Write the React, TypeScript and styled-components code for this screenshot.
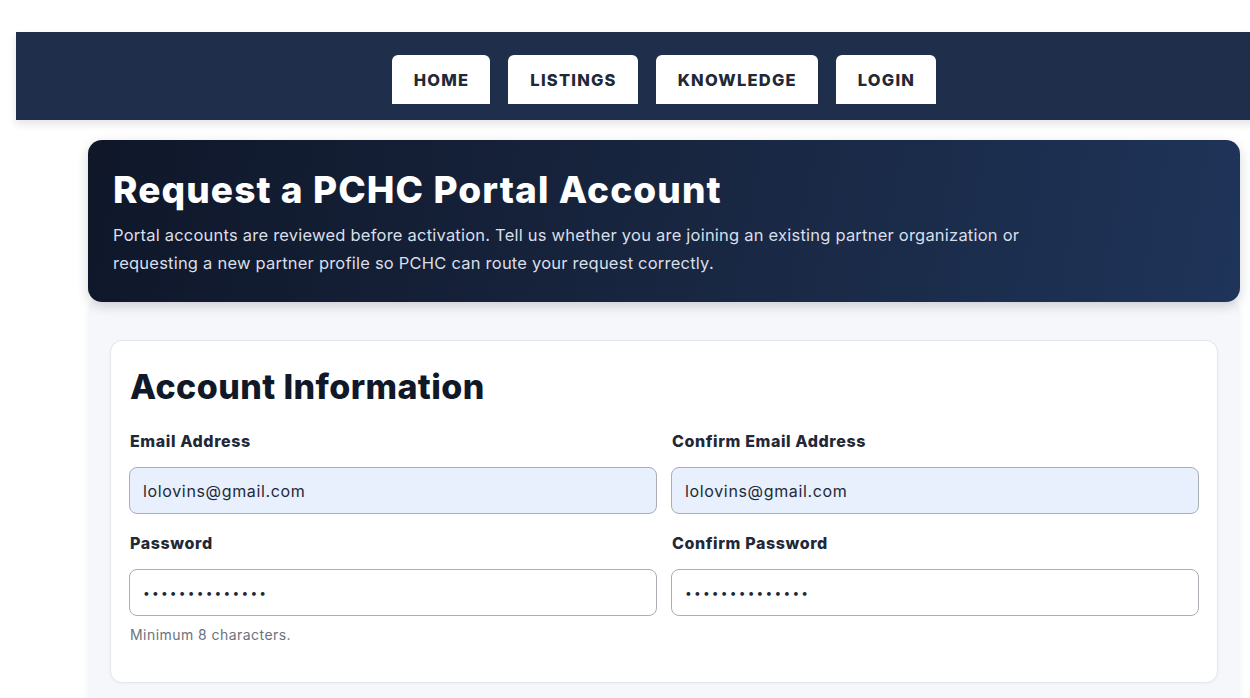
import styled, { createGlobalStyle } from 'styled-components';

const GlobalStyle = createGlobalStyle`
  html, body {
    margin: 0;
    padding: 0;
    background: #ffffff;
    overflow: hidden;
  }
  body {
    font-family: Inter, "Noto Sans", Arial, sans-serif;
    color: #111827;
  }
  * {
    box-sizing: border-box;
  }
`;

const Page = styled.div`
  padding: 32px 0 0 16px;
  width: 1250px;
  min-height: 698px;
`;

const NavBar = styled.nav`
  width: 1296px;
  height: 88px;
  padding-top: 23px;
  background: #1f2e4a;
  display: flex;
  justify-content: center;
  align-items: flex-start;
  gap: 18px;
  box-shadow: 0 4px 8px rgba(15, 23, 42, 0.12);
`;

const NavTab = styled.a`
  height: 49px;
  padding: 0 21px 0 22px;
  display: flex;
  align-items: center;
  background: #ffffff;
  border-radius: 6px 6px 0 0;
  color: #1f2937;
  font-size: 16.5px;
  font-weight: 800;
  letter-spacing: 1.2px;
  text-decoration: none;
`;

const Main = styled.main`
  width: 1152px;
  margin: 20px 0 0 72px;
`;

const Hero = styled.section`
  height: 162px;
  padding: 27px 25px;
  border-radius: 14px;
  background: linear-gradient(100deg, #0f1729 0%, #17243d 45%, #1f3459 100%);
  box-shadow: 0 4px 12px rgba(15, 23, 42, 0.18);
  color: #ffffff;
  position: relative;
  z-index: 1;
`;

const HeroTitle = styled.h1`
  margin: 0;
  font-size: 37px;
  line-height: 46px;
  font-weight: 800;
  letter-spacing: 1.1px;
`;

const HeroText = styled.p`
  margin: 8px 0 0;
  max-width: 940px;
  font-size: 16.5px;
  line-height: 28px;
  letter-spacing: 0.22px;
  color: #d9dfe9;
`;

const Panel = styled.div`
  margin-top: -4px;
  padding: 42px 22px 30px;
  background: #f5f7fa;
  border-radius: 14px 14px 0 0;
  box-shadow: 0 0 6px rgba(15, 23, 42, 0.05);
  min-height: 400px;
`;

const Card = styled.section`
  padding: 24px 18px 38px;
  background: #ffffff;
  border: 1px solid #e3e6eb;
  border-radius: 12px;
  box-shadow: 0 1px 3px rgba(15, 23, 42, 0.04);
`;

const CardTitle = styled.h2`
  margin: 0 0 22px 1px;
  font-size: 34px;
  line-height: 44px;
  font-weight: 800;
  letter-spacing: 0.4px;
  color: #111827;
`;

const FieldGrid = styled.div`
  display: grid;
  grid-template-columns: 1fr 1fr;
  column-gap: 14px;
  row-gap: 19px;
`;

const Field = styled.div`
  display: flex;
  flex-direction: column;
`;

const Label = styled.label`
  margin: 0 0 16px 1px;
  font-size: 16px;
  line-height: 20px;
  font-weight: 800;
  letter-spacing: 0.6px;
  color: #1f2937;
`;

const Input = styled.input<{ $masked?: boolean }>`
  height: 47px;
  padding: 0 13px;
  border: 1px solid #a9adb4;
  border-radius: 8px;
  background: ${(props) => (props.$masked ? '#ffffff' : '#e8effd')};
  font-family: inherit;
  font-size: ${(props) => (props.$masked ? '12px' : '16px')};
  letter-spacing: ${(props) => (props.$masked ? '2.2px' : '0.65px')};
  color: #1f2937;
  outline: none;
`;

const Hint = styled.div`
  margin: 10px 0 0 1px;
  font-size: 14px;
  line-height: 18px;
  letter-spacing: 0.45px;
  color: #6b7280;
`;

const fields = [
  { id: 'email', label: 'Email Address', type: 'email', value: 'lolovins@gmail.com' },
  { id: 'email2', label: 'Confirm Email Address', type: 'email', value: 'lolovins@gmail.com' },
  { id: 'password', label: 'Password', type: 'password', value: 'secretpass1234', hint: 'Minimum 8 characters.' },
  { id: 'password2', label: 'Confirm Password', type: 'password', value: 'secretpass1234' },
];

export default function App() {
  return (
    <>
      <GlobalStyle />
      <Page>
        <NavBar>
          <NavTab href="#">HOME</NavTab>
          <NavTab href="#">LISTINGS</NavTab>
          <NavTab href="#">KNOWLEDGE</NavTab>
          <NavTab href="#">LOGIN</NavTab>
        </NavBar>
        <Main>
          <Hero>
            <HeroTitle>Request a PCHC Portal Account</HeroTitle>
            <HeroText>
              Portal accounts are reviewed before activation. Tell us whether you are joining an existing partner
              organization or requesting a new partner profile so PCHC can route your request correctly.
            </HeroText>
          </Hero>
          <Panel>
            <Card>
              <CardTitle>Account Information</CardTitle>
              <FieldGrid>
                {fields.map((f) => (
                  <Field key={f.id}>
                    <Label htmlFor={f.id}>{f.label}</Label>
                    <Input
                      id={f.id}
                      type={f.type}
                      defaultValue={f.value}
                      $masked={f.type === 'password'}
                      readOnly
                    />
                    {f.hint && <Hint>{f.hint}</Hint>}
                  </Field>
                ))}
              </FieldGrid>
            </Card>
          </Panel>
        </Main>
      </Page>
    </>
  );
}
